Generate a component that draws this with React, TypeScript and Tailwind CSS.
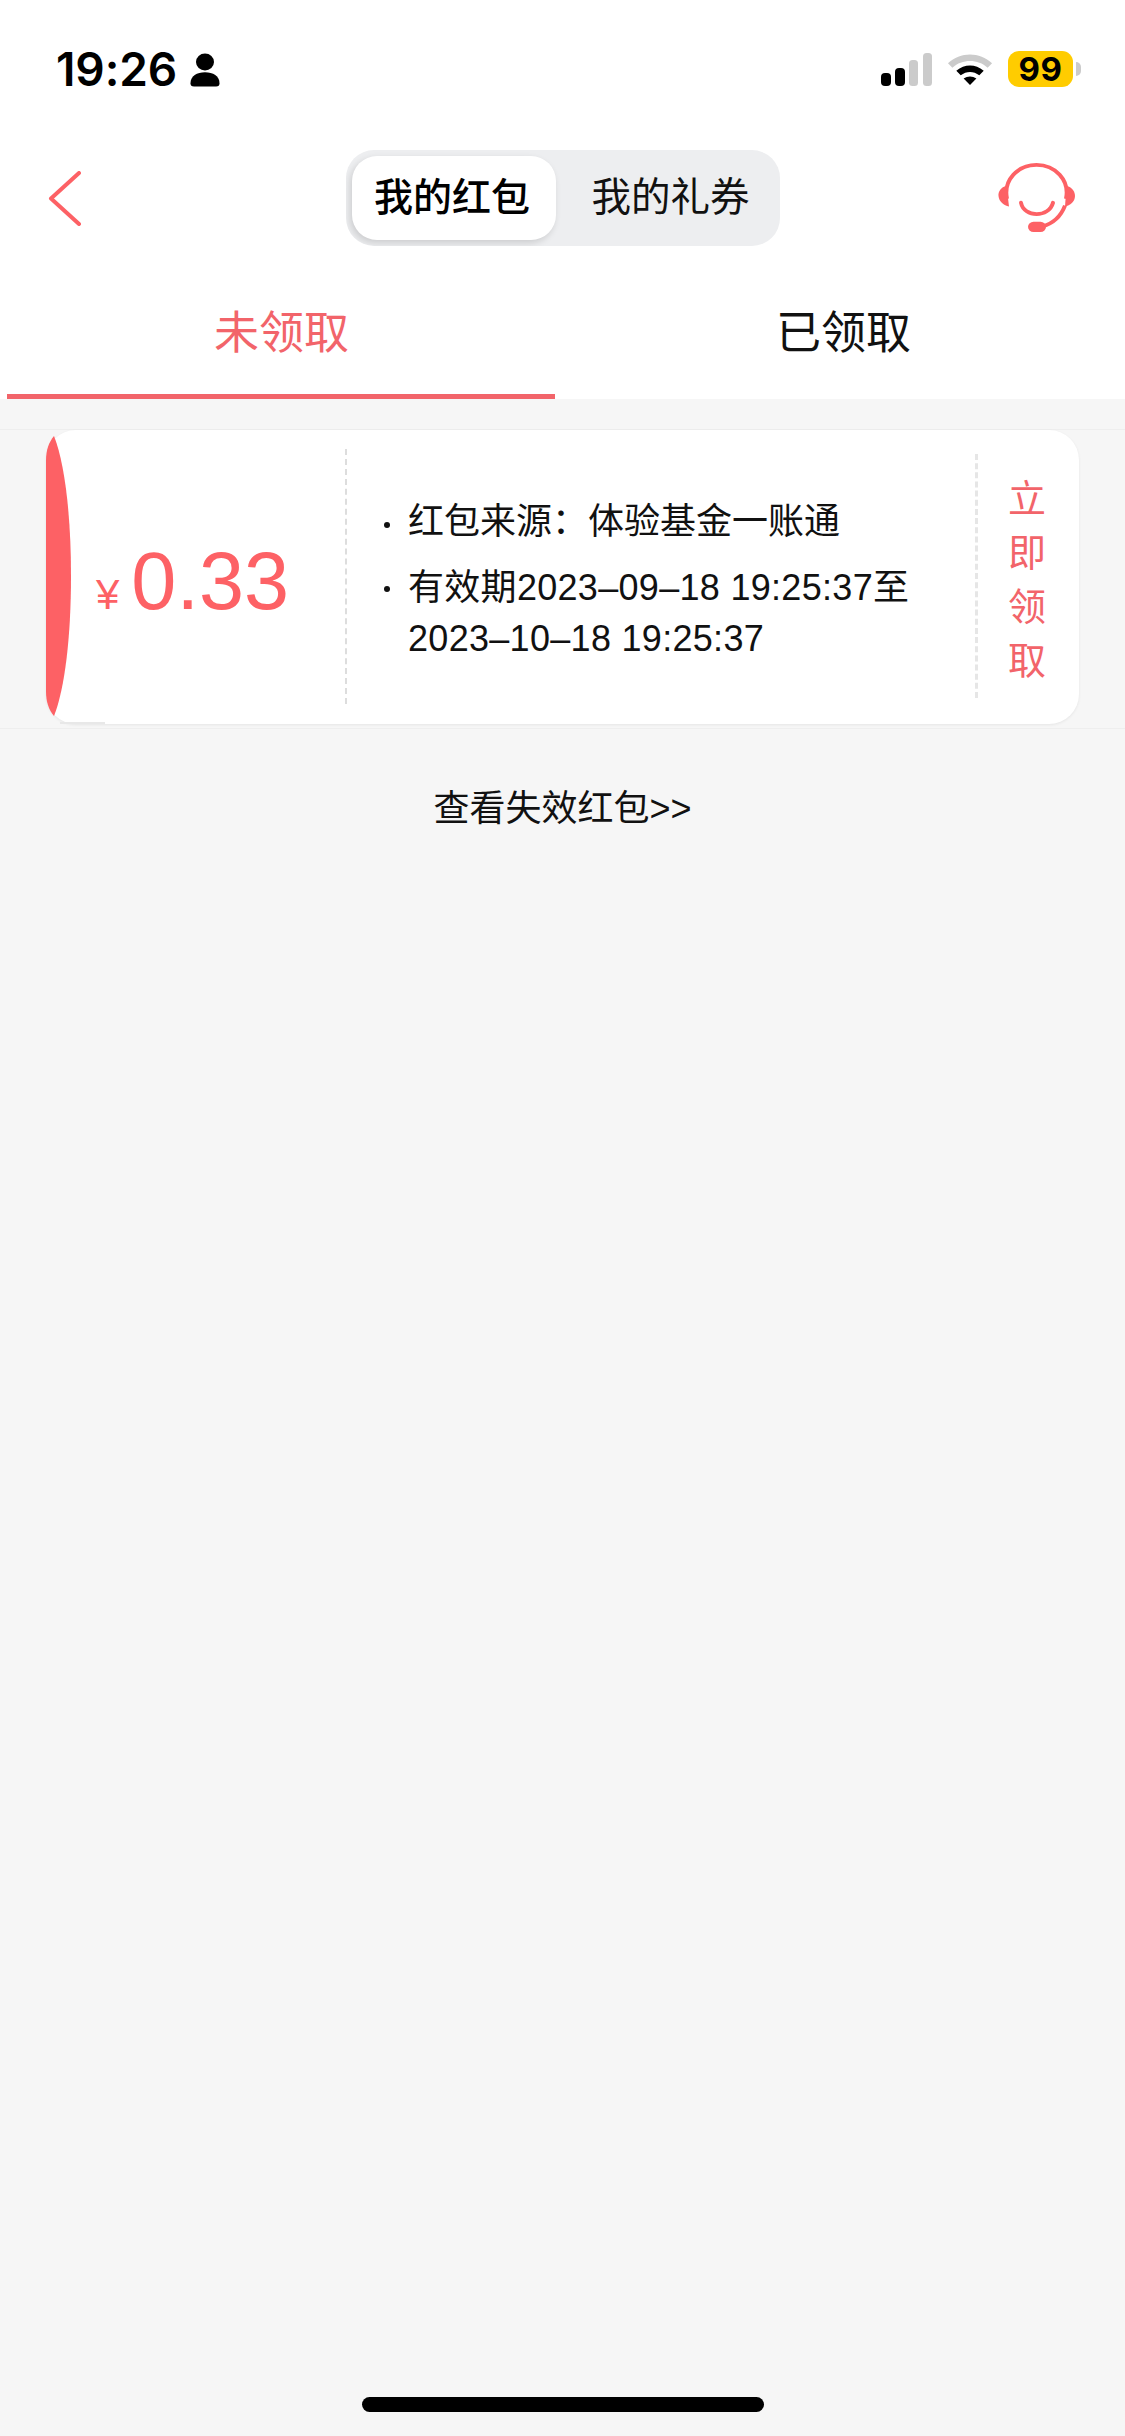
import React from 'react';

const fontStack = "font-['Liberation_Sans','Noto_Sans_CJK_SC',sans-serif]";

function StatusBar() {
  return (
    <div className="h-[150px] shrink-0 flex justify-between pl-[56px] pr-[44px] pt-[51px]">
      <div className="flex items-start gap-[13px] h-[36px]">
        <span className="font-['Inter',sans-serif] text-[46px] leading-[36px] font-semibold text-black tracking-[-0.1px]">19:26</span>
        <svg width="30" height="34" viewBox="0 0 30 36" preserveAspectRatio="none" className="mt-[2px]">
          <circle cx="15" cy="9.5" r="9" fill="#000" />
          <path d="M0.5 32C0.5 24.5 7 20.5 15 20.5C23 20.5 29.5 24.5 29.5 32C29.5 34.5 28.5 35.5 26 35.5H4C1.5 35.5 0.5 34.5 0.5 32Z" fill="#000" />
        </svg>
      </div>
      <div className="flex items-start h-[36px]">
        <svg width="52" height="33" viewBox="0 0 52 33" className="mt-[2px]">
          <rect x="0" y="20" width="10" height="13" rx="4" fill="#000" />
          <rect x="14" y="15" width="10" height="18" rx="4" fill="#000" />
          <rect x="28" y="7" width="9" height="26" rx="3.5" fill="#cbcbcb" />
          <rect x="42" y="0" width="9" height="33" rx="3.5" fill="#cbcbcb" />
        </svg>
        <svg width="47" height="34" viewBox="0 0 48 38" preserveAspectRatio="none" className="ml-[14px] mt-[1px]">
          <path d="M1 12.5C13.5 -0.5 33.5 -0.5 46 12.5L41.5 17.5C31.5 7.5 15.5 7.5 5.5 17.5Z" fill="#cbcbcb" />
          <path d="M9.5 21C18 13 29 13 37.5 21L33 26C27 21 20 21 14 26Z" fill="#000" />
          <path d="M17 29.5C21 26.5 26 26.5 30 29.5L23.5 37Z" fill="#000" />
        </svg>
        <div className="ml-[14px] w-[65px] h-[36px] rounded-[11px] bg-[#ffcc00] flex items-center justify-center font-['Inter',sans-serif] text-[33px] leading-none font-bold text-black tracking-[0.5px]">
          99
        </div>
        <div className="ml-[3px] mt-[11px] w-[5px] h-[14px] rounded-r-full bg-[#cbcbcb]" />
      </div>
    </div>
  );
}

function NavBar() {
  return (
    <div className="h-[96px] shrink-0 flex items-center">
      <div className="flex-1 pl-[48px]">
        <svg width="34" height="55" viewBox="0 0 34 55" className="block">
          <path d="M31 2L3 27.5L31 53" fill="none" stroke="#fd6165" strokeWidth="4" strokeLinecap="round" strokeLinejoin="round" />
        </svg>
      </div>

      <div className="ml-[1px] w-[434px] h-[96px] rounded-[28px] bg-[#edeef0] p-[6px] flex items-stretch overflow-hidden">
        <div className="w-[204px] rounded-[25px] bg-white shadow-[-2px_3px_7px_rgba(0,0,0,0.14)] flex items-center justify-center pr-[3px] text-[39px] font-medium text-black">
          我的红包
        </div>
        <div className="flex-1 flex items-center justify-center pl-[12px] text-[39.5px] text-[#111]">
          我的礼券
        </div>
      </div>

      <div className="flex-1 flex justify-end pr-[49px]">
        <svg width="78" height="70" viewBox="0 0 78 74" preserveAspectRatio="none" className="block">
          <path d="M9 38C5 18 20 2 38.5 2C57 2 72 18 68 38" fill="none" stroke="#fd6165" strokeWidth="4" />
          <path d="M8.5 24C3 25.5 0 30 0.5 35C1 41 6 45 11 46Z" fill="#fd6165" />
          <path d="M68.5 24C74 25.5 77 30 77 35C77 41 72 45 67 46Z" fill="#fd6165" />
          <path d="M23 42C26 58 51 58 55 42" fill="none" stroke="#fd6165" strokeWidth="4" strokeLinecap="round" />
          <path d="M67 45C63 56 55 64 44 67" fill="none" stroke="#fd6165" strokeWidth="4" />
          <rect x="30" y="62" width="18" height="11" rx="5.5" fill="#fd6165" />
        </svg>
      </div>
    </div>
  );
}

function Tabs() {
  return (
    <div className="h-[153px] shrink-0 flex px-[7px]">
      <div className="w-[548px] flex items-center justify-center pt-[27px] pl-[1px] border-b-[5px] border-[#f2646a] text-[45px] text-[#f2646a]">
        未领取
      </div>
      <div className="flex-1 flex items-center justify-center pt-[22px] pl-[14px] text-[45px] text-[#111]">
        已领取
      </div>
    </div>
  );
}

function RedPacketCard() {
  return (
    <div className="mt-[30px] border-y border-[#eeeeee] pb-[4px]">
      <div className="relative ml-[46px] w-[1033px] h-[294px] rounded-[30px] bg-white shadow-[0_1px_3px_rgba(0,0,0,0.07)] flex">
        <svg width="26" height="280" viewBox="0 0 26 280" className="absolute left-0 top-[6px]">
          <path d="M8 0C19 28 25 80 25 140C25 200 19 252 8 280C3 274 0 266 0 256V24C0 14 3 6 8 0Z" fill="#fd6165" />
        </svg>
        <div className="absolute left-[14px] bottom-0 w-[45px] h-[2px] bg-[#e8e8e8]" />

        <div className="w-[299px] pl-[50px] pt-[111px] flex items-baseline text-[#fd6165]">
          <span className="text-[42px] leading-none">¥</span>
          <span className="ml-[12px] text-[81px] leading-none">0.33</span>
        </div>

        <div className="h-[255px] mt-[19px] border-l-2 border-dashed border-[#dddddd]" />

        <div className="w-[628px] pl-[37px] pt-[66px] text-[36px] leading-[51px] text-[#111]">
          <div className="relative pl-[24px]">
            <span className="absolute left-0 top-[26px] w-[6px] h-[6px] rounded-full bg-[#111]" />
            红包来源：体验基金一账通
          </div>
          <div className="relative pl-[24px] mt-[15px] tracking-[0.3px]">
            <span className="absolute left-0 top-[24px] w-[6px] h-[6px] rounded-full bg-[#111]" />
            有效期2023–09–18 19:25:37至
            <br />
            2023–10–18 19:25:37
          </div>
        </div>

        <div className="h-[244px] mt-[24px] border-l-[3px] border-dashed border-[#e6e6e6]" />

        <div className="flex-1 pt-[50px] pr-[3px] flex flex-col items-center gap-[16px] text-[38px] leading-[38px] text-[#f2646a]">
          <span>立</span>
          <span>即</span>
          <span>领</span>
          <span>取</span>
        </div>
      </div>
    </div>
  );
}

export default function App() {
  return (
    <div className={`w-[1125px] h-[2436px] flex flex-col bg-[#f6f6f6] ${fontStack}`}>
      <div className="bg-white">
        <StatusBar />
        <NavBar />
        <Tabs />
      </div>
      <RedPacketCard />
      <div className="mt-[53px] text-center text-[36px] leading-[54px] text-[#111]">查看失效红包&gt;&gt;</div>
      <div className="mt-auto mb-[24px] mx-auto w-[402px] h-[15px] rounded-[8px] bg-black" />
    </div>
  );
}
